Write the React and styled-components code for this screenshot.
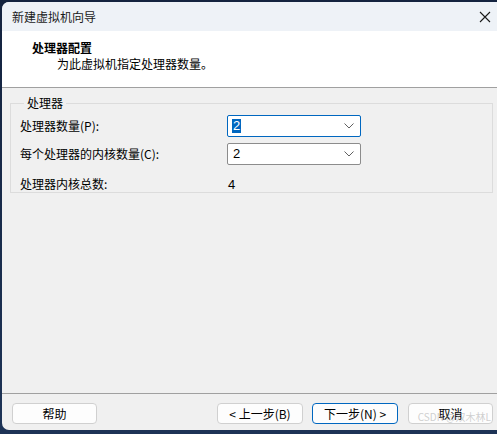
import React from 'react';
import styled, { createGlobalStyle } from 'styled-components';

const Global = createGlobalStyle`
	html, body { margin: 0; padding: 0; background: #1b2a45; }
	body { font-family: 'Noto Sans CJK SC', 'Microsoft YaHei', sans-serif; font-size: 12px; color: #000; }
`;

const Frame = styled.div`
	width: 497px;
	height: 434px;
	box-sizing: border-box;
	padding: 2px 0 4px 2px;
	background: linear-gradient(180deg, #14233f 0%, #1d3356 100%);
	display: flex;
`;

const Window = styled.div`
	flex: 1;
	display: flex;
	flex-direction: column;
	background: #f0f0f0;
	border-radius: 7px 0 0 7px;
	overflow: hidden;
`;

const TitleBar = styled.div`
	height: 29px;
	background: #eef2f7;
	display: flex;
	align-items: center;
	justify-content: space-between;
	padding: 0 6px 0 10px;
	font-size: 12px;
	color: #1a1a1a;
`;

const CloseIcon = styled.svg`
	width: 12px;
	height: 12px;
`;

const Header = styled.div`
	height: 57px;
	background: #fff;
	border-bottom: 1px solid #a0a0a0;
	padding: 9px 0 0 30px;
	box-sizing: border-box;
`;

const HeaderTitle = styled.div`
	font-weight: 700;
	font-size: 12px;
	line-height: 16px;
`;

const HeaderSub = styled.div`
	padding-left: 25px;
	line-height: 16px;
`;

const Body = styled.div`
	flex: 1;
	padding: 8px 4px 0 8px;
`;

const Group = styled.fieldset`
	margin: 0;
	border: 1px solid #dcdcdc;
	padding: 5px 0 10px 9px;
	height: 97px;
	box-sizing: border-box;
	display: grid;
	grid-template-columns: 207px 134px;
	grid-auto-rows: min-content;
	row-gap: 6px;
	align-items: center;
	legend {
		padding: 0 3px;
		margin-left: 4px;
		line-height: 14px;
	}
`;

const Label = styled.div`
	line-height: 16px;
	padding-top: ${(p) => p.$top || 0}px;
`;

const Select = styled.div`
	height: 22px;
	box-sizing: border-box;
	background: #fff;
	border: 1px solid ${(p) => (p.$focus ? '#0067c0' : '#8c8c8c')};
	border-radius: 2px;
	display: flex;
	align-items: center;
	justify-content: space-between;
	padding: 0 6px 0 4px;
	font-family: 'Segoe UI', 'Liberation Sans', sans-serif;
	font-size: 13px;
`;

const Value = styled.span`
	background: ${(p) => (p.$sel ? '#0067c0' : 'transparent')};
	color: ${(p) => (p.$sel ? '#fff' : '#000')};
	line-height: 14px;
	padding: 0 1px;
`;

const Plain = styled.div`
	font-family: 'Liberation Sans', sans-serif;
	font-size: 13px;
	padding: 5px 0 0 1px;
`;

const Footer = styled.div`
	height: 36px;
	border-top: 1px solid #a0a0a0;
	display: flex;
	align-items: center;
	padding: 0 4px 0 10px;
	position: relative;
`;

const Button = styled.button`
	height: 21px;
	width: ${(p) => p.$w || 85}px;
	margin-left: ${(p) => p.$ml || 0}px;
	margin-top: 2px;
	background: #fdfdfd;
	border: 1px solid ${(p) => (p.$primary ? '#0067c0' : '#d0d0d0')};
	border-radius: 4px;
	font-family: 'Noto Sans CJK SC', sans-serif;
	font-size: 12px;
	color: #000;
	padding: 0;
`;

const Watermark = styled.div`
	position: absolute;
	right: 6px;
	bottom: 6px;
	color: rgba(160, 160, 160, 0.5);
	font-size: 10px;
	pointer-events: none;
`;

const Chevron = () => (
	<svg width='10' height='6' viewBox='0 0 10 6'>
		<path d='M0.5 0.5 L5 5 L9.5 0.5' fill='none' stroke='#606060' strokeWidth='1' />
	</svg>
);

export default function App() {
	return (
		<>
			<Global />
			<Frame>
				<Window>
					<TitleBar>
						<span>新建虚拟机向导</span>
						<CloseIcon viewBox='0 0 12 12'>
							<path d='M1 1 L11 11 M11 1 L1 11' stroke='#1a1a1a' strokeWidth='1.1' />
						</CloseIcon>
					</TitleBar>
					<Header>
						<HeaderTitle>处理器配置</HeaderTitle>
						<HeaderSub>为此虚拟机指定处理器数量。</HeaderSub>
					</Header>
					<Body>
						<Group>
							<legend>处理器</legend>
							<Label>处理器数量(P):</Label>
							<Select $focus>
								<Value $sel>2</Value>
								<Chevron />
							</Select>
							<Label>每个处理器的内核数量(C):</Label>
							<Select>
								<Value>2</Value>
								<Chevron />
							</Select>
							<Label $top={5}>处理器内核总数:</Label>
							<Plain>4</Plain>
						</Group>
					</Body>
					<Footer>
						<Button $w={85}>帮助</Button>
						<Button $w={86} $ml={120}>&lt; 上一步(B)</Button>
						<Button $w={86} $ml={9} $primary>下一步(N) &gt;</Button>
						<Button $w={85} $ml={10}>取消</Button>
						<Watermark>CSDN @双木林L</Watermark>
					</Footer>
				</Window>
			</Frame>
		</>
	);
}
